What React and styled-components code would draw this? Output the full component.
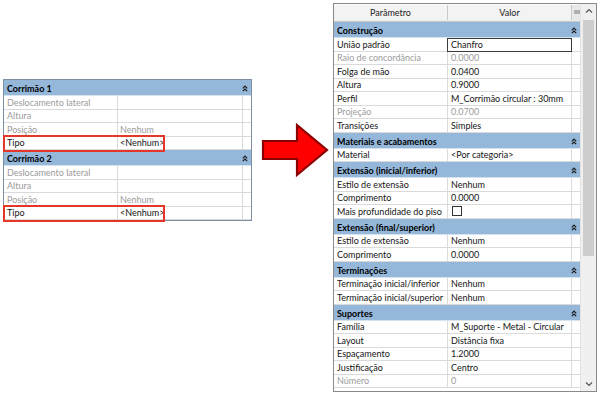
import React from "react";
import styled, { createGlobalStyle, css } from "styled-components";

const GlobalStyle = createGlobalStyle`
  html, body {
    margin: 0;
    padding: 0;
    background: #ffffff;
  }
  body {
    font-family: Lato, "Noto Sans", sans-serif;
    font-size: 9px;
    color: #111;
  }
`;

const Page = styled.div`
  display: flex;
  align-items: flex-start;
  width: 600px;
  height: 395px;
  overflow: hidden;
`;

const LeftPanel = styled.div`
  margin: 79px 0 0 3px;
  width: 249px;
  box-sizing: border-box;
  border: 1px solid #7d8fa3;
  background: #fff;
`;

const ArrowWrap = styled.div`
  margin: 122px 0 0 9px;
  width: 70px;
  height: 56px;
`;

const RightPanel = styled.div`
  margin: 3px 0 0 2px;
  width: 264px;
  height: 389px;
  box-sizing: border-box;
  border: 1px solid #8a8a8a;
  display: flex;
  background: #fff;
`;

const Grid = styled.div`
  flex: 1;
  display: flex;
  flex-direction: column;
  overflow: hidden;
`;

const Row = styled.div`
  position: relative;
  display: grid;
  grid-template-columns: ${(p) => p.$cols};
  height: 13.5px;
  box-sizing: border-box;
  border-bottom: 1px solid #dadada;
  ${(p) =>
    p.$mark &&
    css`
      &::after {
        content: "";
        position: absolute;
        left: -1px;
        top: -2px;
        width: 162px;
        height: 17px;
        box-sizing: border-box;
        border: 2px solid #e5362a;
      }
    `}
`;

const Cell = styled.div`
  display: flex;
  align-items: center;
  padding-left: ${(p) => (p.$tight ? 2 : 3)}px;
  white-space: nowrap;
  overflow: hidden;
  color: ${(p) => (p.$dim ? "#9c9c9c" : "#151515")};
  border-right: 1px solid #dadada;
  &:last-child {
    border-right: none;
  }
`;

const EditCell = styled(Cell)`
  border: 1px solid #3a3a3a;
  margin: 0 0 -1px -1px;
  padding-left: 3px;
`;

const Check = styled.span`
  width: 8px;
  height: 8px;
  border: 1px solid #333;
  background: #fff;
  margin-left: 1px;
`;

const GroupHead = styled.div`
  display: flex;
  align-items: center;
  justify-content: space-between;
  height: 16px;
  box-sizing: border-box;
  padding: 2px 3px 0 3px;
  background: #94b7da;
  border-bottom: 1px solid #d6e2ee;
  font-weight: 700;
  color: #000;
`;

const HeaderRow = styled.div`
  display: grid;
  grid-template-columns: ${(p) => p.$cols};
  height: 18px;
  box-sizing: border-box;
  background: linear-gradient(#fbfbfb, #ececec);
  border-bottom: 1px solid #c9c9c9;
`;

const HeaderCell = styled.div`
  display: flex;
  align-items: center;
  justify-content: center;
  border-right: 1px solid #c9c9c9;
  margin: 1px 0;
  background: #f3f3f3;
  color: #222;
  &:last-child {
    border-right: none;
    background: #e8e8e8;
  }
`;

const Scrollbar = styled.div`
  width: 15px;
  display: flex;
  flex-direction: column;
  align-items: center;
  background: #f0f0f0;
  border-left: 1px solid #e2e2e2;
`;

const ScrollArrow = styled.div`
  height: 14px;
  display: flex;
  align-items: center;
  justify-content: center;
`;

const Thumb = styled.div`
  width: 11px;
  height: 236px;
  margin-top: 2px;
  background: #cdcdcd;
`;

const Spacer = styled.div`
  flex: 1;
`;

const Chevrons = () => (
  <svg width="6" height="7" viewBox="0 0 6 7">
    <path d="M0.8 3.3 L3 1.1 L5.2 3.3 M0.8 6.2 L3 4 L5.2 6.2" fill="none" stroke="#1a1a1a" strokeWidth="1.2" />
  </svg>
);

const Caret = ({ down }) => (
  <svg width="8" height="6" viewBox="0 0 8 6">
    <path d={down ? "M1 1.5 L4 4.5 L7 1.5" : "M1 4.5 L4 1.5 L7 4.5"} fill="none" stroke="#555" strokeWidth="1.2" />
  </svg>
);

const FilterIcon = () => (
  <svg width="6" height="5" viewBox="0 0 6 5">
    <path d="M0 1 H6 M0 3 H6" stroke="#777" strokeWidth="1" />
  </svg>
);

const LEFT_COLS = "114px 125px 8px";
const RIGHT_COLS = "114px 124px 9px";

const leftGroups = [
  {
    title: "Corrimão 1",
    rows: [
      ["Deslocamento lateral", "", true],
      ["Altura", "", true],
      ["Posição", "Nenhum", true],
      ["Tipo", "<Nenhum>", false, true],
    ],
  },
  {
    title: "Corrimão 2",
    rows: [
      ["Deslocamento lateral", "", true],
      ["Altura", "", true],
      ["Posição", "Nenhum", true],
      ["Tipo", "<Nenhum>", false, true],
    ],
  },
];

const rightGroups = [
  {
    title: "Construção",
    rows: [
      ["União padrão", "Chanfro", false, "edit"],
      ["Raio de concordância", "0.0000", true],
      ["Folga de mão", "0.0400"],
      ["Altura", "0.9000"],
      ["Perfil", "M_Corrimão circular : 30mm"],
      ["Projeção", "0.0700", true],
      ["Transições", "Simples"],
    ],
  },
  {
    title: "Materiais e acabamentos",
    rows: [["Material", "<Por categoria>"]],
  },
  {
    title: "Extensão (inicial/inferior)",
    rows: [
      ["Estilo de extensão", "Nenhum"],
      ["Comprimento", "0.0000"],
      ["Mais profundidade do piso", "", false, "check"],
    ],
  },
  {
    title: "Extensão (final/superior)",
    rows: [
      ["Estilo de extensão", "Nenhum"],
      ["Comprimento", "0.0000"],
    ],
  },
  {
    title: "Terminações",
    rows: [
      ["Terminação inicial/inferior", "Nenhum"],
      ["Terminação inicial/superior", "Nenhum"],
    ],
  },
  {
    title: "Suportes",
    rows: [
      ["Família", "M_Suporte - Metal - Circular"],
      ["Layout", "Distância fixa"],
      ["Espaçamento", "1.2000"],
      ["Justificação", "Centro"],
      ["Número", "0", true],
    ],
  },
];

function Group({ group, cols, marked }) {
  return (
    <>
      <GroupHead>
        <span>{group.title}</span>
        <Chevrons />
      </GroupHead>
      {group.rows.map(([name, value, dim, kind], i) => {
        const mark = marked && kind === true;
        return (
          <Row key={i} $cols={cols} $mark={mark}>
            <Cell $dim={dim}>{name}</Cell>
            {kind === "edit" ? (
              <EditCell>{value}</EditCell>
            ) : (
              <Cell $dim={dim} $tight={marked}>
                {kind === "check" ? <Check /> : value}
              </Cell>
            )}
            <Cell />
          </Row>
        );
      })}
    </>
  );
}

function RedArrow() {
  return (
    <svg width="70" height="56" viewBox="0 0 70 56">
      <polygon
        points="2,19 36,19 36,3 66,28 36,53 36,37 2,37"
        fill="#ff0000"
        stroke="#8a0000"
        strokeWidth="2.2"
        strokeLinejoin="miter"
      />
    </svg>
  );
}

export default function App() {
  return (
    <>
      <GlobalStyle />
      <Page>
        <LeftPanel>
          {leftGroups.map((g) => (
            <Group key={g.title} group={g} cols={LEFT_COLS} marked />
          ))}
        </LeftPanel>
        <ArrowWrap>
          <RedArrow />
        </ArrowWrap>
        <RightPanel>
          <Grid>
            <HeaderRow $cols={RIGHT_COLS}>
              <HeaderCell>Parâmetro</HeaderCell>
              <HeaderCell>Valor</HeaderCell>
              <HeaderCell>
                <FilterIcon />
              </HeaderCell>
            </HeaderRow>
            {rightGroups.map((g) => (
              <Group key={g.title} group={g} cols={RIGHT_COLS} />
            ))}
          </Grid>
          <Scrollbar>
            <ScrollArrow>
              <Caret />
            </ScrollArrow>
            <Thumb />
            <Spacer />
            <ScrollArrow>
              <Caret down />
            </ScrollArrow>
          </Scrollbar>
        </RightPanel>
      </Page>
    </>
  );
}
